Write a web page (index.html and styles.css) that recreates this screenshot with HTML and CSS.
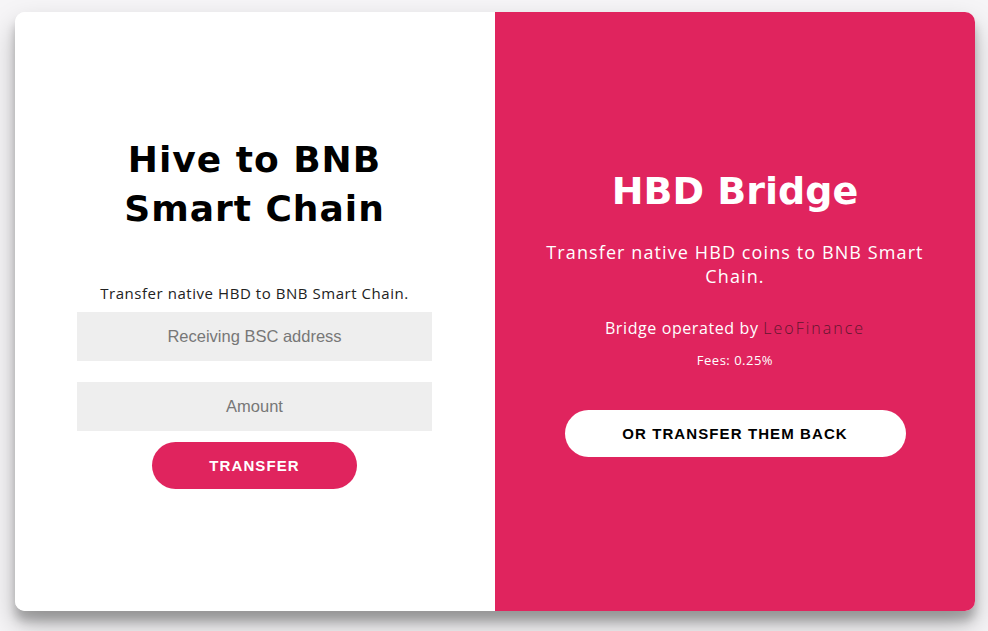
FILE: index.html
```html
<!DOCTYPE html>
<html lang="en">
<head>
<meta charset="utf-8">
<title>HBD Bridge</title>
<link rel="stylesheet" href="styles.css">
</head>
<body>
<div class="page">
  <div class="card">
    <form class="panel panel-form">
      <h1 class="title-left">Hive to BNB<br>Smart Chain</h1>
      <p class="lead-left">Transfer native HBD to BNB Smart Chain.</p>
      <input class="field" type="text" placeholder="Receiving BSC address">
      <input class="field field-second" type="text" placeholder="Amount">
      <button class="btn btn-primary" type="button">Transfer</button>
    </form>
    <div class="panel panel-info">
      <h1 class="title-right">HBD Bridge</h1>
      <p class="lead-right">Transfer native HBD coins to BNB Smart Chain.</p>
      <p class="operated">Bridge operated by <a class="leo" href="#">LeoFinance</a></p>
      <p class="fees">Fees: 0.25%</p>
      <button class="btn btn-ghost" type="button">Or transfer them back</button>
    </div>
  </div>
</div>
</body>
</html>
```
FILE: styles.css
```css
* { box-sizing: border-box; }
html, body {
  margin: 0;
  padding: 0;
  background: #f6f5f7;
  font-family: "Open Sans", "DejaVu Sans", sans-serif;
}
.page {
  padding: 12px 13px 20px 15px;
}
.card {
  width: 960px;
  height: 599px;
  border-radius: 10px;
  overflow: hidden;
  display: flex;
  background: #fff;
  box-shadow: 0 14px 28px rgba(0,0,0,0.25), 0 10px 10px rgba(0,0,0,0.22);
}
.panel {
  width: 480px;
  height: 100%;
  display: flex;
  flex-direction: column;
  align-items: center;
  justify-content: center;
  text-align: center;
  margin: 0;
}
.panel-form {
  background: #fff;
  padding: 0 63px 0 62px;
}
.panel-info {
  background: #e0245e;
  color: #fff;
  padding: 1px 45px 0 45px;
}
.title-left {
  margin: 0;
  font-family: "DejaVu Sans", sans-serif;
  font-size: 36px;
  font-weight: bold;
  line-height: 49px;
  color: #000;
  letter-spacing: 1px;
}
.lead-left {
  margin: 50px 0 9px;
  font-size: 15px;
  line-height: 20px;
  color: #222;
  letter-spacing: 0.55px;
}
.field {
  display: block;
  width: 100%;
  height: 49px;
  border: none;
  background: #eee;
  text-align: center;
  font-family: "Liberation Sans", Arial, sans-serif;
  font-size: 16.5px;
  padding: 0 15px;
  outline: none;
}
.field::placeholder { color: #777; }
.field-second { margin-top: 21px; }
.btn {
  font-family: "Liberation Sans", Arial, sans-serif;
  font-weight: bold;
  font-size: 15px;
  letter-spacing: 1.1px;
  text-transform: uppercase;
  border: none;
  border-radius: 24px;
  height: 47px;
  cursor: pointer;
}
.btn-primary {
  margin-top: 11px;
  width: 205px;
  background: #e0245e;
  color: #fff;
}
.title-right {
  margin: 0;
  font-family: "DejaVu Sans", sans-serif;
  font-size: 38px;
  font-weight: bold;
  line-height: 48px;
  letter-spacing: 0;
}
.lead-right {
  margin: 25px 0 0;
  font-size: 18px;
  line-height: 24px;
  letter-spacing: 1.1px;
}
.operated {
  margin: 30px 0 0;
  font-size: 16px;
  line-height: 20px;
  letter-spacing: 0.6px;
}
.leo {
  color: #62162f;
  text-decoration: none;
  font-weight: 300;
  letter-spacing: 2px;
}
.fees {
  margin: 14px 0 0;
  font-size: 13px;
  line-height: 16px;
  letter-spacing: 0.5px;
}
.btn-ghost {
  margin-top: 42px;
  width: 341px;
  background: #fff;
  color: #000;
}
```
